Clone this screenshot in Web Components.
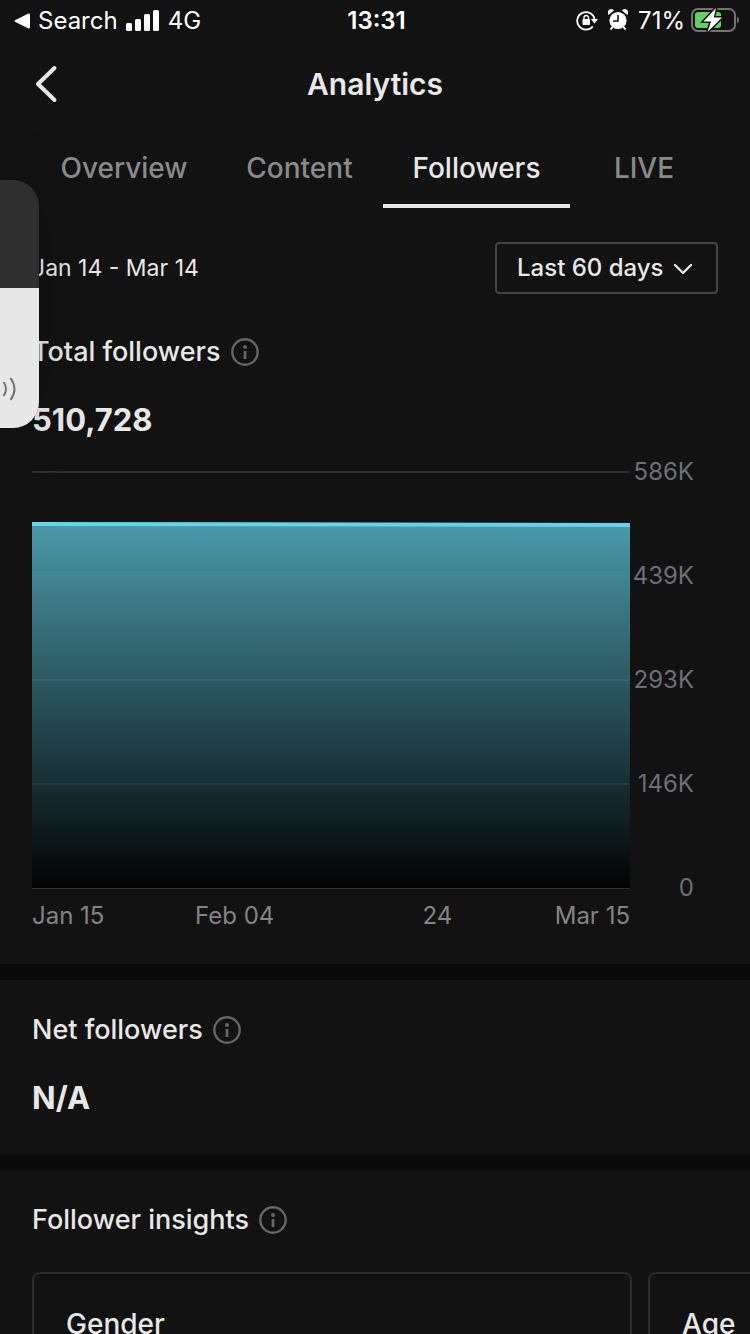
<!DOCTYPE html>
<html lang="en">
<head>
<meta charset="utf-8">
<meta name="viewport" content="width=device-width, initial-scale=1">
<title>Analytics</title>
<style>
html { background: #121212; scrollbar-width: none; }
body { margin: 0; color: #e8e8e8; font-family: Inter, "Liberation Sans", sans-serif; }
</style>
</head>
<body>
<analytics-app></analytics-app>
<script>
const define = (name, html, setup) => {
  const template = document.createElement('template');
  template.innerHTML = html;
  customElements.define(name, class extends HTMLElement {
    constructor() {
      super();
      this.attachShadow({ mode: 'open' }).append(template.content.cloneNode(true));
    }
    connectedCallback() { if (setup) setup(this, this.shadowRoot); }
  });
};

define('status-bar', `
<style>
:host { box-sizing: border-box; display: grid; grid-template-columns: 1fr auto 1fr; align-items: center; height: 40px; padding: 2px 11px 0 14px; font: 400 24px/32px Inter, sans-serif; color: #fff; }
div { display: flex; align-items: center; gap: 8px; }
.end { justify-content: flex-end; gap: 10px; }
.battery { gap: 6px; }
svg { flex: none; }
.battery svg, .end > svg { margin-bottom: 2px; }
time { font-weight: 600; }
</style>
<div>
  <svg width="16" height="16" viewBox="0 0 16 16" aria-hidden="true"><path d="M1.500 7 14 .8q2-.8 2 1.200v12q0 2-2 1.200L1.500 9q-2-1 0-2Z" fill="#fff"/></svg>
  <span>Search</span>
  <svg width="34" height="24" viewBox="0 0 34 24" aria-hidden="true" fill="#fff"><rect y="14" width="6" height="8" rx="1.500"/><rect x="9" y="10" width="6" height="12" rx="1.500"/><rect x="18" y="5" width="6" height="17" rx="1.500"/><rect x="27" y="1" width="6" height="21" rx="1.500"/></svg>
  <span>4G</span>
</div>
<time>13:31</time>
<div class="end">
  <svg width="22" height="22" viewBox="0 0 22 22" aria-hidden="true"><path d="M16.800 17.500A8.800 8.800 0 1 1 18.600 10" fill="none" stroke="#fff" stroke-width="1.800"/><path d="M14.800 10H22L18.500 14.500Z" fill="#fff"/><rect x="6.500" y="10" width="7.500" height="6" rx="1" fill="#fff"/><path d="M8 10.500V8.800a2.250 2.250 0 0 1 4.500 0v1.700" fill="none" stroke="#fff" stroke-width="1.400"/></svg>
  <svg width="20" height="22" viewBox="0 0 20 22" aria-hidden="true"><circle cx="10" cy="11.500" r="8.600" fill="#fff"/><path d="M.5 6A3.400 3.400 0 0 1 6 1.500ZM14 1.500A3.400 3.400 0 0 1 19.500 6Z" fill="#fff"/><path d="M4.500 18l-2 2.500M15.500 18l2 2.500" fill="none" stroke="#fff" stroke-width="2"/><path d="M10 6v6H5" fill="none" stroke="#121212" stroke-width="1.600"/></svg>
  <div class="battery"><span>71%</span>
  <svg width="48" height="24" viewBox="0 0 48 24" aria-hidden="true"><rect x="1" y="1" width="43" height="22" rx="6" fill="none" stroke="#737373" stroke-width="2"/><rect x="4" y="4" width="26" height="16" rx="3" fill="#62d165"/><path d="M46 8.500q2 1 2 3.500t-2 3.500Z" fill="#737373"/><path d="M25 0 12.500 13.500H20L16.500 24 31 9.600H22.800Z" fill="#fff" stroke="#121212" stroke-width="3" paint-order="stroke"/></svg></div>
</div>`);

define('app-header', `
<style>
:host { display: grid; grid-template-columns: 1fr auto 1fr; align-items: center; height: 88px; padding: 0 32px; }
button { justify-self: start; display: flex; padding: 0; border: 0; background: none; color: inherit; }
h1 { margin: 0; font-size: 30px; line-height: 40px; font-weight: 600; }
</style>
<button type="button" aria-label="Back"><svg width="28" height="40" viewBox="0 0 28 40" aria-hidden="true"><path d="M22.500 4 6 20l16.500 16" fill="none" stroke="currentColor" stroke-width="4" stroke-linecap="round" stroke-linejoin="round"/></svg></button>
<h1><slot></slot></h1>`);

define('tab-bar', `
<style>
:host { display: block; padding: 0 32px; }
nav { display: grid; grid-template-columns: 184fr 167fr 187fr 148fr; }
</style>
<nav><slot></slot></nav>`);

define('tab-link', `
<style>
:host { display: block; }
a { display: block; height: 76px; border-bottom: 4px solid transparent; color: #8a8a8a; font-size: 28px; line-height: 80px; font-weight: 500; text-align: center; text-decoration: none; }
:host([selected]) a { color: #e8e8e8; border-color: #e8e8e8; }
</style>
<a href="#"><slot></slot></a>`, (host, root) => {
  if (host.hasAttribute('selected')) root.querySelector('a').setAttribute('aria-current', 'page');
});

define('range-picker', `
<style>
:host { display: flex; align-items: center; justify-content: space-between; font-size: 23px; line-height: 32px; }
label { position: relative; display: flex; }
select { appearance: none; margin: 0; height: 52px; padding: 0 52px 0 20px; border: 2px solid #444; border-radius: 4px; background: transparent; color: inherit; font: 500 24px/32px Inter, sans-serif; }
svg { position: absolute; right: 25px; top: 20px; pointer-events: none; }
</style>
<span><slot></slot></span>
<label><select aria-label="Date range"><option>Last 60 days</option></select>
<svg width="20" height="14" viewBox="0 0 20 14" aria-hidden="true"><path d="m2 3 8 8 8-8" fill="none" stroke="#e8e8e8" stroke-width="2.400" stroke-linecap="round" stroke-linejoin="round"/></svg></label>`);

define('section-title', `
<style>
:host { display: flex; align-items: center; gap: 10px; }
h2 { margin: 0; font-size: 27px; line-height: 36px; font-weight: 500; }
button { display: flex; padding: 0; border: 0; background: none; color: #666; }
</style>
<h2><slot></slot></h2>
<button type="button" aria-label="More information"><svg width="28" height="28" viewBox="0 0 28 28" aria-hidden="true"><circle cx="14" cy="14" r="12.700" fill="none" stroke="currentColor" stroke-width="2.400"/><circle cx="14" cy="9" r="2" fill="currentColor"/><path d="M14 13v8" stroke="currentColor" stroke-width="2.800"/></svg></button>`);

define('metric-value', `
<style>
:host { display: block; margin-top: 28px; font-size: 31px; line-height: 44px; font-weight: 700; }
</style>
<slot></slot>`);

define('page-section', `
<style>
:host { display: block; padding: 32px 32px 34px; border-bottom: 16px solid #0a0a0a; }
:host([first]) { padding: 34px 32px 32px; }
:host([last]) { border: 0; }
</style>
<slot></slot>`);

define('area-chart', `
<style>
:host { display: grid; grid-template-columns: 1fr 88px; margin-top: 29px; color: #848484; font-size: 24px; line-height: 32px; }
svg { display: block; width: 100%; height: 418px; }
.y { display: flex; flex-direction: column; gap: 72px; margin: -15px 24px -15px 0; text-align: right; color: #6e6e76; }
.x { display: grid; grid-template-columns: 10fr 20fr 20fr 9fr; margin-top: 11px; white-space: nowrap; }
.x span { justify-self: center; }
.x span:first-child { justify-self: start; }
.x span:last-child { justify-self: end; }
</style>
<svg viewBox="0 0 598 418" preserveAspectRatio="none" role="img" aria-label="Total followers over the last 60 days">
  <defs><linearGradient id="fill" x1="0" y1="0" x2="0" y2="1"><stop offset="0" stop-color="#4b99aa"/><stop offset="1" stop-color="#030303"/></linearGradient></defs>
  <path d="M0 1h598" stroke="#2e2e2e" stroke-width="2"/>
  <path d="M0 53 598 54V417H0Z" fill="url(#fill)"/>
  <path d="M0 105h598M0 209h598M0 313h598" stroke="#5fd0d0" stroke-opacity=".1" stroke-width="2"/>
  <path d="M0 417.500h598" stroke="#333"/>
  <path d="M0 53 598 54" stroke="#65d3eb" stroke-width="4"/>
</svg>
<div class="y"><span>586K</span><span>439K</span><span>293K</span><span>146K</span><span>0</span></div>
<div class="x"><span>Jan 15</span><span>Feb 04</span><span>24</span><span>Mar 15</span></div>`);

define('insight-cards', `
<style>
:host { display: flex; gap: 16px; margin: 34px -32px 0 0; overflow-x: auto; scrollbar-width: none; }
</style>
<slot></slot>`);

define('insight-card', `
<style>
:host { display: block; box-sizing: border-box; flex: none; width: 80vw; min-height: 320px; padding: 32px; border: 2px solid #2b2b2b; border-radius: 8px; }
h3 { margin: 0; font-size: 28px; line-height: 36px; font-weight: 500; }
</style>
<h3><slot></slot></h3>`);

define('volume-hud', `
<style>
:host { position: absolute; left: 0; top: 180px; width: 39px; height: 248px; border-radius: 0 26px 26px 0; overflow: hidden; display: flex; flex-direction: column; background: #2f2f2f; box-shadow: 0 0 64px rgba(0,0,0,.2); }
div { margin-top: auto; height: 140px; background: #e8e8e8; }
svg { display: block; margin-top: 88px; }
</style>
<div><svg width="20" height="26" viewBox="0 0 20 26" aria-hidden="true"><path d="M3.500 6q5 7 0 14M10.500 2q8 11 0 22" fill="none" stroke="#737373" stroke-width="2"/></svg></div>`);

define('analytics-app', `
<style>
:host { display: block; position: relative; overflow-x: hidden; }
range-picker + section-title { margin-top: 40px; }
</style>
<status-bar></status-bar>
<app-header>Analytics</app-header>
<tab-bar><tab-link>Overview</tab-link><tab-link>Content</tab-link><tab-link selected>Followers</tab-link><tab-link>LIVE</tab-link></tab-bar>
<main>
  <page-section first>
    <range-picker>Jan 14 - Mar 14</range-picker>
    <section-title>Total followers</section-title>
    <metric-value>510,728</metric-value>
    <area-chart></area-chart>
  </page-section>
  <page-section>
    <section-title>Net followers</section-title>
    <metric-value>N/A</metric-value>
  </page-section>
  <page-section last>
    <section-title>Follower insights</section-title>
    <insight-cards><insight-card>Gender</insight-card><insight-card>Age</insight-card></insight-cards>
  </page-section>
</main>
<volume-hud></volume-hud>`);
</script>
</body>
</html>
